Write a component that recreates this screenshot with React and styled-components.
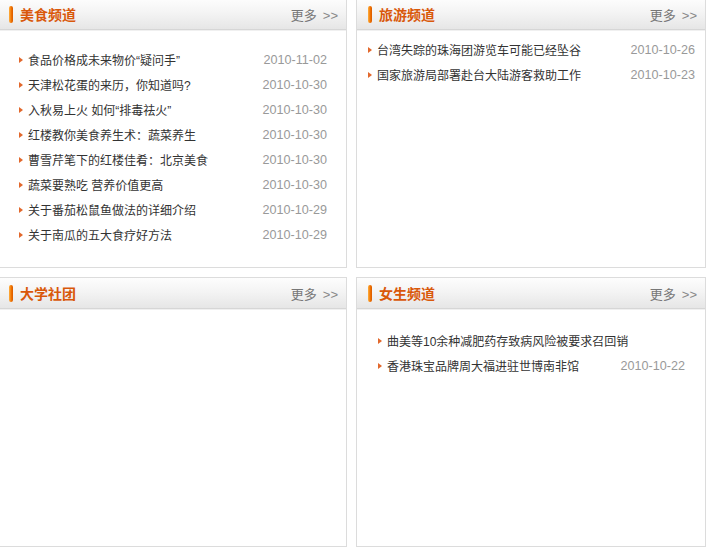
import styled, { createGlobalStyle } from 'styled-components'

const GlobalStyle = createGlobalStyle`
  html, body {
    margin: 0;
    padding: 0;
    background: #ffffff;
    overflow: hidden;
  }
  body {
    font-family: "Liberation Sans", "Noto Sans CJK SC", sans-serif;
    font-size: 12px;
    color: #333;
  }
`

const Page = styled.div`
  display: grid;
  grid-template-columns: 350px 350px;
  grid-auto-rows: 270px;
  gap: 9px;
  margin: -2px 0 0 -3px;
`

const Panel = styled.div`
  border: 1px solid #dcdcdc;
  background: #fff;
  box-sizing: border-box;
  display: flex;
  flex-direction: column;
`

const Header = styled.div`
  height: 30px;
  flex-shrink: 0;
  display: flex;
  align-items: center;
  padding: 0 8px 0 11px;
  background: linear-gradient(to bottom, #fdfdfd 0%, #f4f4f4 45%, #e6e6e6 100%);
  border-bottom: 1px solid #d6d6d6;
  box-shadow: 0 1px 0 #f0f0f0;
`

const Bar = styled.span`
  width: 4px;
  height: 17px;
  border-radius: 2px;
  background: linear-gradient(to right, #ffb040, #ee7000 60%, #d85a00);
  margin-right: 7px;
`

const Title = styled.h3`
  margin: 0;
  flex: 1;
  font-family: "Noto Sans CJK SC", sans-serif;
  font-size: 14px;
  font-weight: bold;
  color: #d9580a;
`

const More = styled.a`
  color: #777;
  font-family: "Noto Sans CJK SC", sans-serif;
  font-size: 13px;
  text-decoration: none;
  cursor: pointer;

  span {
    font-family: "Liberation Sans", sans-serif;
    color: #888;
    margin-left: 6px;
  }
`

const List = styled.ul`
  list-style: none;
  margin: 0;
  padding: ${(p) => p.$pad};
`

const Item = styled.li`
  height: 25px;
  display: flex;
  align-items: center;
`

const Arrow = styled.i`
  width: 0;
  height: 0;
  border-left: 4px solid #e2682c;
  border-top: 3.5px solid transparent;
  border-bottom: 3.5px solid transparent;
  margin-right: 5px;
  flex-shrink: 0;
`

const Link = styled.a`
  flex: 1;
  color: #333;
  font-family: "Liberation Sans", "Noto Sans CJK SC", sans-serif;
  font-size: 12px;
  white-space: nowrap;
  overflow: hidden;
  cursor: pointer;
`

const Date = styled.span`
  color: #999;
  font-family: "Liberation Sans", sans-serif;
  font-size: 12.6px;
  margin-left: 8px;
`

const panels = [
  {
    title: '美食频道',
    pad: '17px 19px 0 21px',
    items: [
      ['食品价格成未来物价“疑问手”', '2010-11-02'],
      ['天津松花蛋的来历，你知道吗?', '2010-10-30'],
      ['入秋易上火 如何“排毒祛火”', '2010-10-30'],
      ['红楼教你美食养生术：蔬菜养生', '2010-10-30'],
      ['曹雪芹笔下的红楼佳肴：北京美食', '2010-10-30'],
      ['蔬菜要熟吃 营养价值更高', '2010-10-30'],
      ['关于番茄松鼠鱼做法的详细介绍', '2010-10-29'],
      ['关于南瓜的五大食疗好方法', '2010-10-29'],
    ],
  },
  {
    title: '旅游频道',
    pad: '7px 10px 0 11px',
    items: [
      ['台湾失踪的珠海团游览车可能已经坠谷', '2010-10-26'],
      ['国家旅游局部署赴台大陆游客救助工作', '2010-10-23'],
    ],
  },
  {
    title: '大学社团',
    pad: '0',
    items: [],
  },
  {
    title: '女生频道',
    pad: '19px 20px 0 21px',
    items: [
      ['曲美等10余种减肥药存致病风险被要求召回销', ''],
      ['香港珠宝品牌周大福进驻世博南非馆', '2010-10-22'],
    ],
  },
]

const App = () => {
  return (
    <>
      <GlobalStyle />
      <Page>
        {panels.map((p) => (
          <Panel key={p.title}>
            <Header>
              <Bar />
              <Title>{p.title}</Title>
              <More>
                更多<span>&gt;&gt;</span>
              </More>
            </Header>
            <List $pad={p.pad}>
              {p.items.map(([text, date]) => (
                <Item key={text}>
                  <Arrow />
                  <Link>{text}</Link>
                  {date && <Date>{date}</Date>}
                </Item>
              ))}
            </List>
          </Panel>
        ))}
      </Page>
    </>
  )
}

export default App
